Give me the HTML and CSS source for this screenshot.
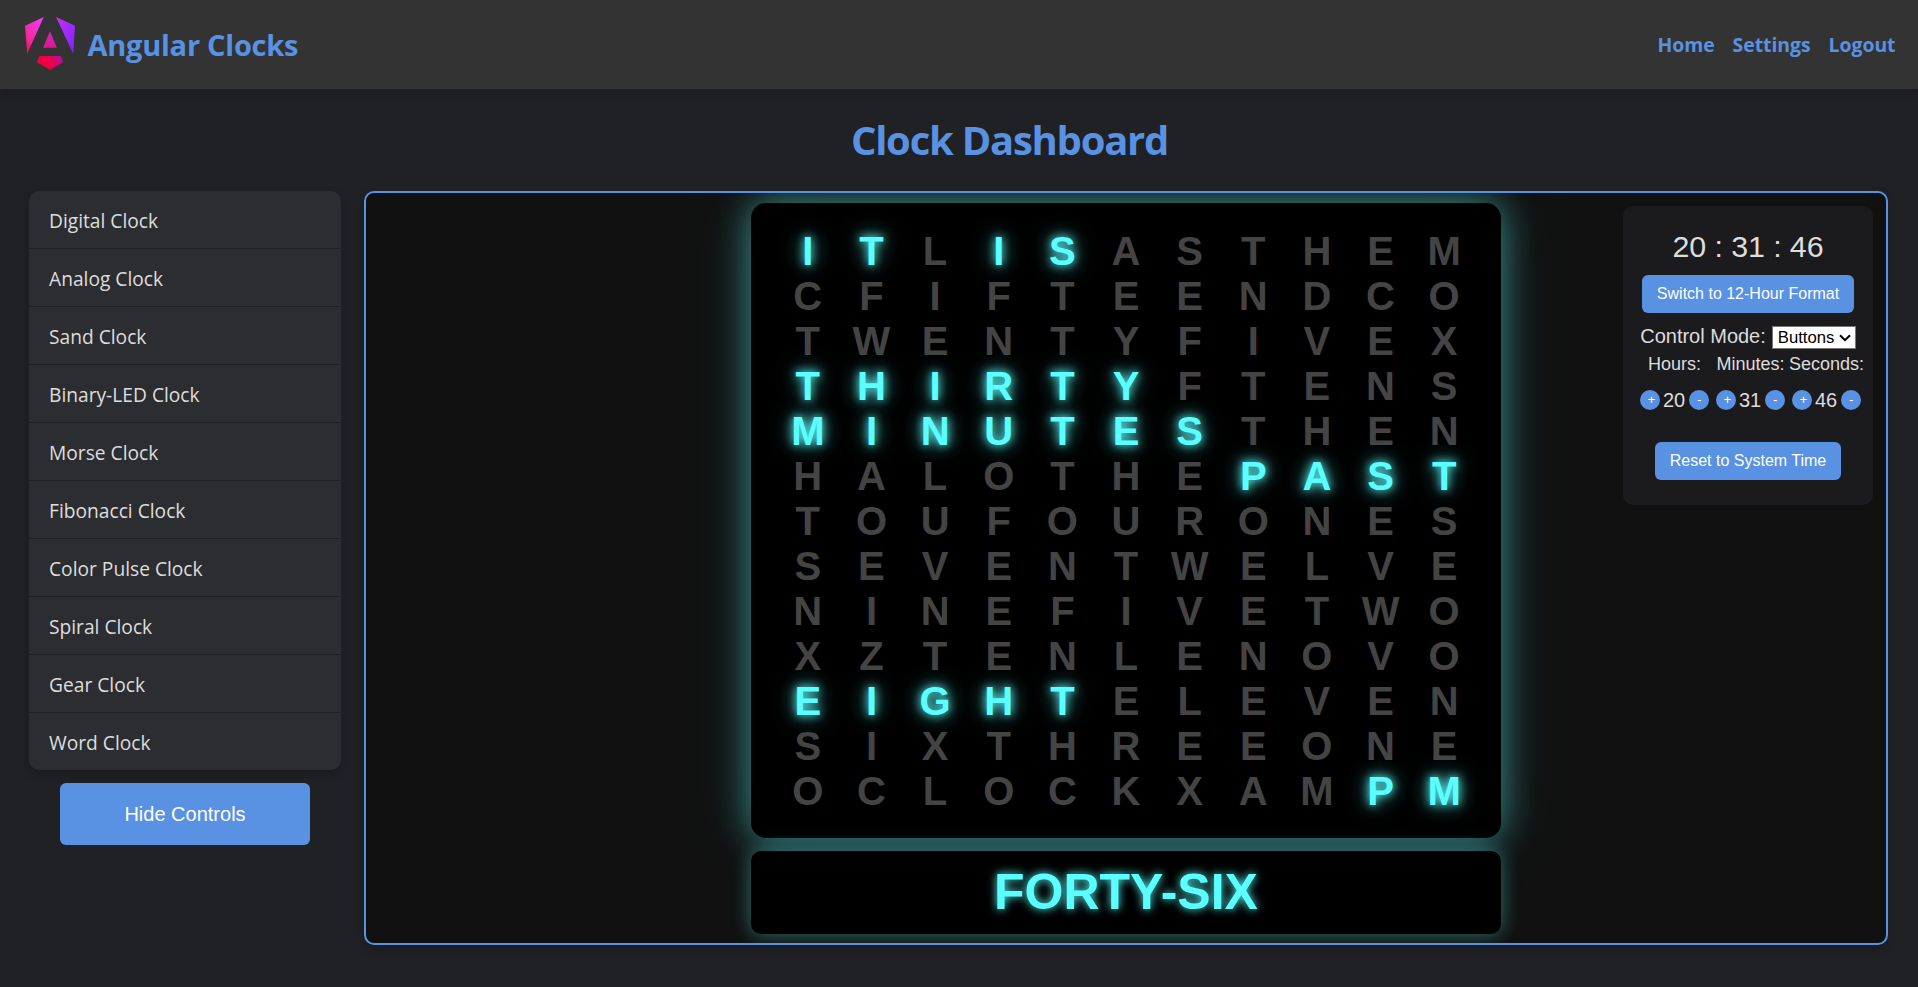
FILE: index.html
```html
<!DOCTYPE html>
<html lang="en">
<head>
<meta charset="utf-8">
<title>Angular Clocks</title>
<link rel="stylesheet" href="styles.css">
</head>
<body>
<header class="topbar">
  <div class="brand">
    <svg class="logo" viewBox="0 0 50 53" width="50" height="53">
      <defs>
        <linearGradient id="warm" x1="0" y1="1" x2="0.75" y2="0">
          <stop offset="0" stop-color="#f0003c"/><stop offset="0.35" stop-color="#ee2a9a"/><stop offset="1" stop-color="#f03cf0"/>
        </linearGradient>
        <linearGradient id="cool" x1="0" y1="0" x2="1" y2="1">
          <stop offset="0" stop-color="#c832f5"/><stop offset="1" stop-color="#7a22ff"/>
        </linearGradient>
        <linearGradient id="mid" x1="0.3" y1="1" x2="0.6" y2="0">
          <stop offset="0" stop-color="#e0148c"/><stop offset="1" stop-color="#cc28c4"/>
        </linearGradient>
        <linearGradient id="base" x1="0" y1="0.5" x2="1" y2="0.2">
          <stop offset="0" stop-color="#f20040"/><stop offset="0.55" stop-color="#ea0050"/><stop offset="1" stop-color="#b010a8"/>
        </linearGradient>
      </defs>
      <path fill="url(#warm)" d="M0 8.7 18.8 0 2.2 36.7z"/>
      <path fill="url(#cool)" d="M31 0 50 8.7 48.2 36.7z"/>
      <path fill="url(#mid)" d="M25 14.3 31.9 30.8H18z"/>
      <path fill="url(#base)" d="M14.3 39h21.4L38 45.3 25 52.8 12 45.3z"/>
    </svg>
    <span class="brand-name">Angular Clocks</span>
  </div>
  <nav class="nav"><a>Home</a><a>Settings</a><a>Logout</a></nav>
</header>
<h1 class="title">Clock Dashboard</h1>
<div class="layout">
  <aside class="side">
    <ul class="menu">
      <li>Digital Clock</li><li>Analog Clock</li><li>Sand Clock</li><li>Binary-LED Clock</li><li>Morse Clock</li><li>Fibonacci Clock</li><li>Color Pulse Clock</li><li>Spiral Clock</li><li>Gear Clock</li><li>Word Clock</li>
    </ul>
    <button class="hide">Hide Controls</button>
  </aside>
  <main class="stage">
    <div class="word-clock">
      <div class="letters" id="letters"></div>
      <div class="seconds">FORTY-SIX</div>
    </div>
    <section class="controls">
      <div class="time">20 : 31 : 46</div>
      <button class="btn">Switch to 12-Hour Format</button>
      <div class="mode"><label>Control Mode:</label><div class="picker"><select><option>Buttons</option></select><svg class="chevron" viewBox="0 0 12 8" width="12" height="8"><path d="M1 1.2 6 6.2 11 1.2" fill="none" stroke="#000" stroke-width="2"/></svg></div></div>
      <div class="units">
        <div class="unit"><span class="unit-name">Hours:</span><div class="step"><button>+</button><span>20</span><button>-</button></div></div>
        <div class="unit"><span class="unit-name">Minutes:</span><div class="step"><button>+</button><span>31</span><button>-</button></div></div>
        <div class="unit"><span class="unit-name">Seconds:</span><div class="step"><button>+</button><span>46</span><button>-</button></div></div>
      </div>
      <button class="btn reset">Reset to System Time</button>
    </section>
  </main>
</div>
<script src="clock.js"></script>
</body>
</html>
```
FILE: clock.js
```js
// Rows of the word grid; [] encloses the lit letters.
const rows = [
  "[IT]L[IS]ASTHEM", "CFIFTEENDCO", "TWENTYFIVEX", "[THIRTY]FTENS",
  "[MINUTES]THEN", "HALOTHE[PAST]", "TOUFOURONES", "SEVENTWELVE",
  "NINEFIVETWO", "XZTENLENOVO", "[EIGHT]ELEVEN", "SIXTHREEONE", "OCLOCKXAM[PM]"
];
const grid = document.getElementById("letters");
let lit = false;
for (const ch of rows.join("")) {
  if (ch === "[") { lit = true; continue; }
  if (ch === "]") { lit = false; continue; }
  const cell = document.createElement("span");
  cell.textContent = ch;
  if (lit) cell.className = "lit";
  grid.append(cell);
}
```
FILE: styles.css
```css
* { box-sizing: border-box; }
body { margin: 0; height: 987px; overflow: hidden; background: #202124; color: #ddd; font-family: "Open Sans", "Noto Sans", sans-serif; }
button { font-family: "Liberation Sans", Arial, sans-serif; border: 0; background: #5991e3; color: #fff; padding: 0; }
.topbar { height: 89px; background: #333; display: flex; justify-content: space-between; align-items: center; padding: 0 22.5px 0 25px; box-shadow: 0 2px 10px rgba(0,0,0,.2); color: #5991e3; font-weight: 700; }
.brand { display: flex; align-items: center; gap: 12.5px; }
.logo { display: block; margin-bottom: 2px; }
.brand-name { font-size: 29px; letter-spacing: -0.25px; line-height: 40px; }
.nav { display: flex; gap: 18px; font-size: 19.4px; letter-spacing: -0.03px; }
.title { margin: 0; padding: 26px 0 0 101px; height: 102px; line-height: 50px; text-align: center; font-size: 40px; color: #5991e3; letter-spacing: -1.25px; }
.layout { display: flex; gap: 23px; padding: 0 30px 0 29px; }
.side { width: 312px; display: flex; flex-direction: column; align-items: center; gap: 13px; }
.menu { list-style: none; margin: 0; padding: 0; width: 100%; background: #2c2d31; border-radius: 10px; box-shadow: 0 4px 10px rgba(0,0,0,.2); }
.menu li { height: 58px; line-height: 60px; padding-left: 20px; font-size: 19.2px; border-bottom: 1px solid #202124; letter-spacing: 0; }
.menu li:last-child { border: 0; height: 57px; }
.hide { width: 250px; height: 62px; border-radius: 6px; font-size: 20px; }
.stage { flex: 1; height: 754px; display: grid; grid-template-columns: 1fr 750px 1fr; border: 2px solid #5991e3; border-radius: 10px; background: #111; overflow: hidden; font-family: "Liberation Sans", Arial, sans-serif; box-shadow: 0 4px 10px rgba(0,0,0,.2); }
.word-clock { grid-column: 2; padding-top: 10px; display: flex; flex-direction: column; gap: 13px; font-weight: 700; }
.letters { height: 635px; padding: 26px 25px 24px; display: grid; grid-template-columns: repeat(11, 1fr); grid-auto-rows: 45px; border-radius: 15px; background: #000; box-shadow: 0 0 35px rgba(91,255,255,.48), 0 0 75px rgba(91,255,255,.13); text-align: center; font-size: 40px; line-height: 45px; color: #444; }
.lit { color: #5bffff; text-shadow: 0 0 10px #5bffff, 0 0 20px rgba(91,255,255,.8); }
.seconds { height: 83px; border-radius: 10px; background: #000; text-align: center; line-height: 82px; font-size: 50px; color: #5bffff; text-shadow: 0 0 10px #5bffff; box-shadow: 0 0 20px rgba(91,255,255,.4); }
.controls { width: 250px; height: 299px; margin: 13px 13px 0 0; justify-self: end; padding-top: 22px; border-radius: 10px; background: #1b1b1d; display: flex; flex-direction: column; align-items: center; }
.time { font-size: 30.4px; line-height: 36px; letter-spacing: -0.1px; }
.btn { width: 212px; height: 38px; margin-top: 11px; border-radius: 6px; font-size: 16px; flex: none; }
.mode { display: flex; align-items: center; gap: 6px; margin-top: 13px; height: 23px; font-size: 20px; }
.mode label { margin-top: -3px; }
.picker { position: relative; display: flex; }
.picker select { appearance: none; width: 84px; height: 23px; font: 16.7px "Liberation Sans", Arial, sans-serif; background: #fff; border: 1px solid #767676; color: #000; border-radius: 0; padding: 0 0 0 5px; }
.chevron { position: absolute; right: 5px; top: 8px; }
.units { display: flex; gap: 6px; margin-top: 4px; padding-left: 5px; }
.unit { width: 70px; display: flex; flex-direction: column; align-items: center; }
.unit-name { font-size: 18px; line-height: 22px; white-space: nowrap; }
.step { display: flex; align-items: center; gap: 4px; margin-top: 14px; height: 22px; font-size: 20px; }
.step span { margin-left: -1px; }
.step button { width: 20px; height: 20px; border-radius: 50%; font-size: 13.3px; line-height: 20px; padding-left: 3px; }
.step button:last-child { padding-left: 0; }
.reset { width: 186px; margin-top: 31px; }
```
